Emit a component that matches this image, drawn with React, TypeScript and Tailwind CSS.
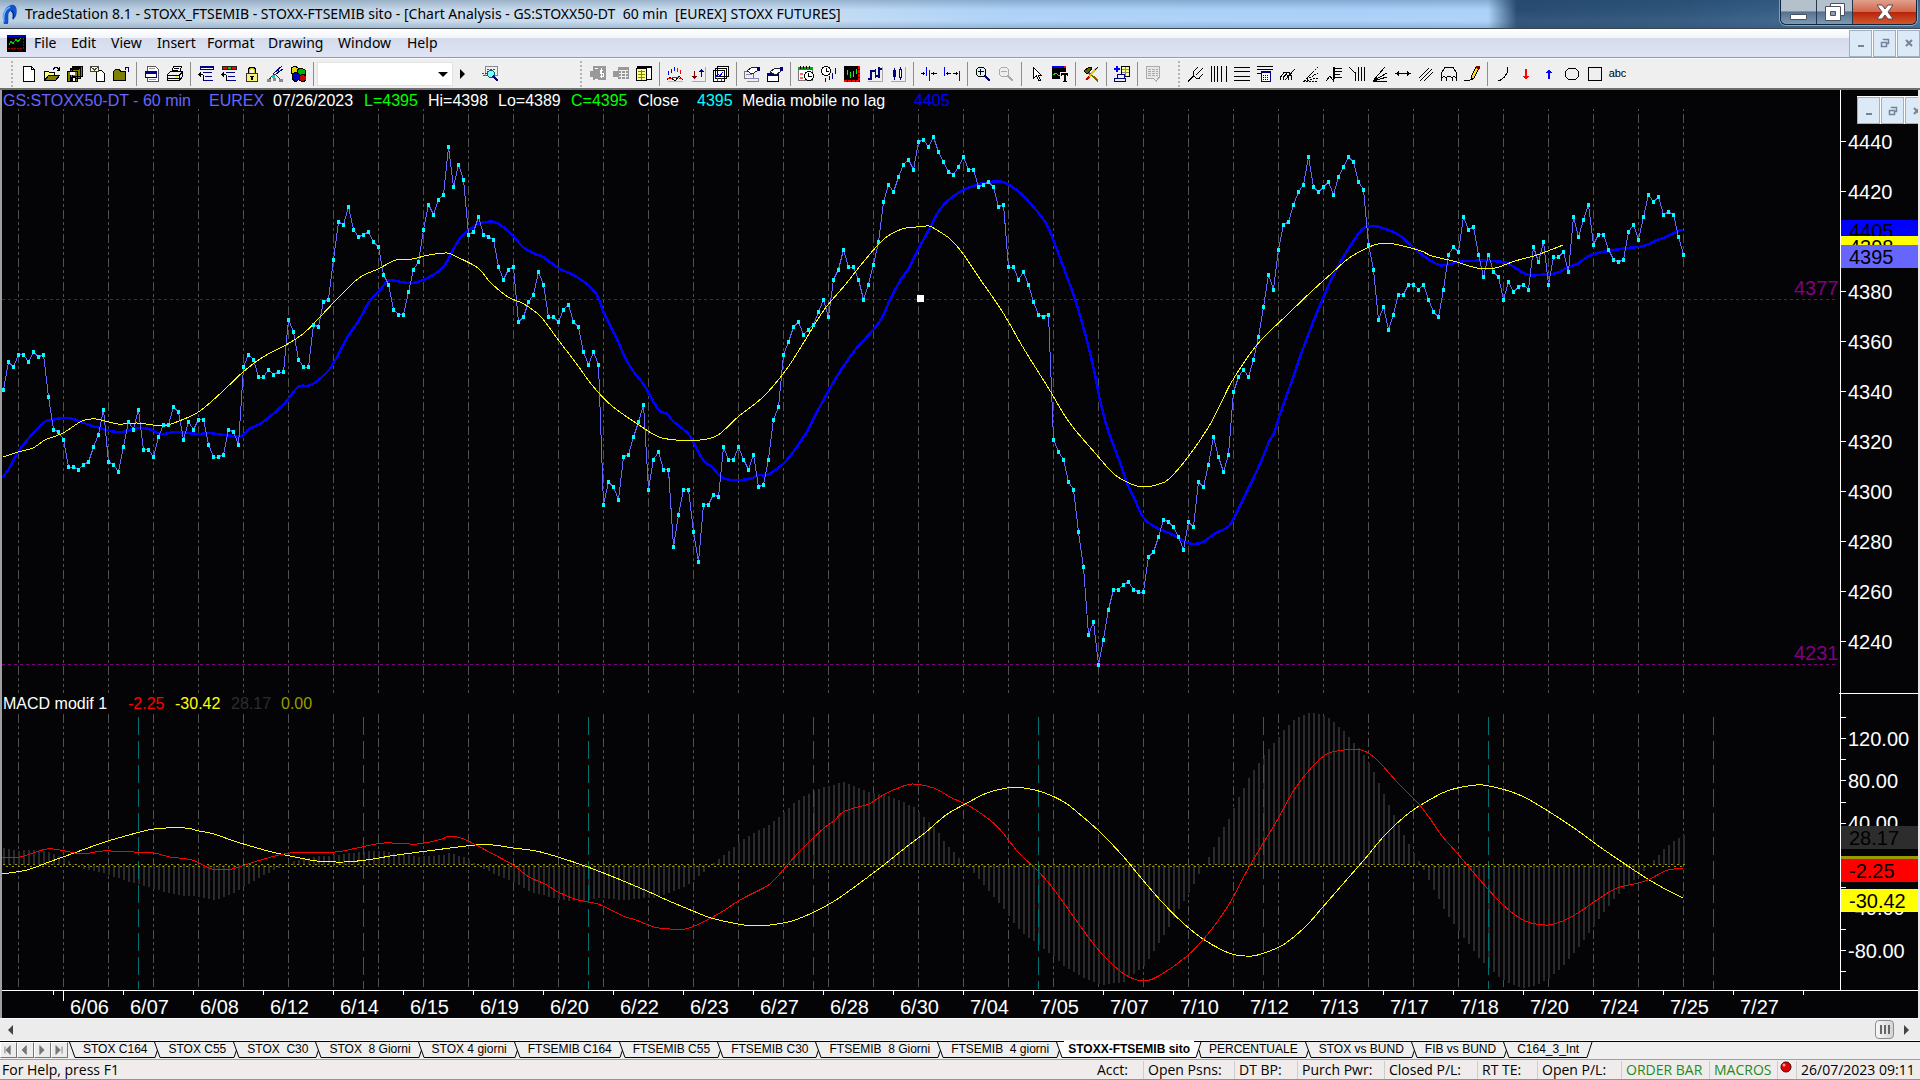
import type { ReactNode } from "react";
import clsx from "clsx";

const UI = "font-['Open_Sans','Noto_Sans',sans-serif]";
const UI_WIDE = "font-['Noto_Sans','Open_Sans',sans-serif]";
const ARIAL = "font-['Liberation_Sans',Arial,sans-serif]";

/* ---------- chart data ---------- */

// hourly closes, 9 bars per session
const closes = [
  4341, 4352, 4350, 4355, 4355, 4352, 4356, 4354, 4355, 4338, 4325, 4324, 4321, 4310, 4310, 4309, 4311, 4312,
  4318, 4323, 4333, 4312, 4311, 4308, 4318, 4328, 4325, 4333, 4317, 4317, 4314, 4322, 4327, 4327, 4334, 4332,
  4321, 4328, 4325, 4329, 4329, 4319, 4314, 4314, 4315, 4325, 4324, 4319, 4350, 4355, 4353, 4346, 4346, 4349,
  4347, 4348, 4348, 4369, 4364, 4353, 4350, 4350, 4367, 4366, 4376, 4377, 4393, 4408, 4407, 4414, 4405, 4402,
  4403, 4404, 4400, 4398, 4387, 4383, 4373, 4371, 4371, 4380, 4389, 4392, 4405, 4415, 4411, 4417, 4419, 4438,
  4422, 4431, 4425, 4403, 4404, 4410, 4403, 4402, 4401, 4390, 4385, 4389, 4390, 4368, 4370, 4376, 4379, 4388,
  4383, 4370, 4370, 4368, 4373, 4375, 4368, 4366, 4356, 4351, 4356, 4351, 4295, 4304, 4302, 4297, 4314, 4315,
  4322, 4328, 4335, 4301, 4313, 4316, 4309, 4309, 4278, 4291, 4301, 4301, 4284, 4272, 4295, 4295, 4299, 4298,
  4318, 4313, 4313, 4318, 4313, 4309, 4315, 4302, 4303, 4313, 4329, 4334, 4355, 4360, 4366, 4368, 4363, 4365,
  4367, 4372, 4377, 4370, 4385, 4389, 4397, 4390, 4390, 4385, 4377, 4383, 4391, 4400, 4416, 4423, 4420, 4426,
  4431, 4433, 4429, 4440, 4441, 4438, 4442, 4436, 4432, 4428, 4427, 4430, 4434, 4429, 4429, 4422, 4423, 4424,
  4422, 4414, 4415, 4390, 4390, 4385, 4388, 4383, 4376, 4371, 4370, 4371, 4321, 4316, 4313, 4304, 4301, 4284,
  4270, 4243, 4248, 4231, 4241, 4253, 4261, 4261, 4263, 4264, 4261, 4260, 4260, 4274, 4276, 4282, 4289, 4288,
  4286, 4282, 4277, 4288, 4286, 4304, 4302, 4311, 4322, 4314, 4308, 4315, 4340, 4346, 4349, 4346, 4353, 4362,
  4374, 4387, 4381, 4397, 4407, 4408, 4415, 4420, 4423, 4434, 4422, 4420, 4422, 4424, 4419, 4426, 4430, 4434,
  4432, 4424, 4421, 4399, 4389, 4369, 4374, 4365, 4371, 4379, 4379, 4383, 4383, 4381, 4383, 4377, 4372, 4370,
  4381, 4395, 4398, 4396, 4410, 4405, 4406, 4395, 4386, 4395, 4388, 4386, 4377, 4384, 4380, 4382, 4383, 4381,
  4398, 4392, 4400, 4383, 4394, 4394, 4396, 4388, 4410, 4402, 4409, 4415, 4399, 4403, 4403, 4397, 4393, 4392,
  4393, 4404, 4407, 4401, 4410, 4419, 4416, 4418, 4411, 4412, 4411, 4402, 4395,
];

type Line = [number, number][];

const parse = (points: string) => points.split(" ").map((p) => p.split(",").map(Number)) as Line;

const noLag = parse(
  "3,477 10,467 18,452 29,438 43,423 51,420 63,418 73,419 84,423 96,427 110,431 122,432 137,428 149,429 161,434 176,432 198,434 208,433 224,435 241,436 249,429 263,422 284,404 298,387 308,386 316,382 329,370 337,357 347,338 359,320 369,302 378,292 388,281 396,281 408,283 418,282 433,275 444,266 453,250 462,236 478,224 486,222 494,222 502,226 513,236 523,247 535,254 543,257 558,268 569,273 580,279 590,287 598,297 604,313 616,337 624,355 633,371 644,385 658,409 667,414 674,422 689,435 703,460 712,467 720,476 730,480 749,479 759,475 767,475 784,463 796,448 808,430 816,414 829,390 841,370 855,350 864,340 880,321 890,300 900,281 909,268 920,246 931,226 941,208 955,195 973,186 990,182 1003,182 1018,191 1031,204 1043,219 1049,229 1063,266 1076,302 1086,337 1094,370 1100,400 1108,430 1118,457 1127,483 1135,500 1143,517 1153,526 1171,534 1184,541 1193,544 1203,542 1214,534 1229,526 1238,510 1249,487 1260,464 1269,442 1274,433 1280,414 1289,389 1300,357 1314,320 1324,296 1336,270 1354,240 1364,228 1374,226 1383,228 1399,235 1412,246 1425,257 1439,265 1450,264 1466,261 1503,262 1517,269 1528,275 1539,275 1557,273 1566,268 1577,264 1591,255 1608,251 1628,248 1644,246 1655,241 1666,237 1678,231 1683,230",
);

const centered = parse(
  "3,457 18,452 33,448 45,440 63,433 82,421 96,419 118,424 137,423 153,425 167,425 184,419 200,411 222,392 243,372 263,357 286,345 304,333 320,317 339,297 359,278 378,269 396,260 412,259 429,255 447,253 455,256 478,268 490,282 508,297 524,304 541,317 559,341 576,363 592,385 612,406 645,429 659,437 676,440 700,440 718,435 739,416 763,397 786,370 804,342 824,310 845,285 865,260 884,239 902,229 916,227 929,226 935,229 949,238 961,251 980,279 1002,311 1024,349 1049,389 1069,422 1096,454 1114,474 1131,484 1145,487 1159,484 1169,479 1188,457 1208,428 1220,405 1231,383 1247,358 1262,339 1287,315 1312,291 1332,273 1349,258 1365,249 1378,244 1394,244 1421,251 1432,256 1457,262 1477,268 1495,268 1515,261 1537,255 1563,245",
);

const macd = parse(
  "2,857 20,857 47,849 65,851 83,854 103,851 134,852 154,853 170,857 192,860 212,869 232,869 254,862 290,853 335,852 357,848 384,843 417,844 442,839 449,836 464,839 491,853 513,865 529,877 545,884 558,892 578,900 598,904 623,916 636,920 654,927 670,929 685,929 699,924 720,913 740,900 767,886 777,877 789,863 803,848 824,828 834,821 843,812 858,807 869,804 885,794 901,787 913,784 934,788 950,797 971,807 991,821 1003,833 1018,852 1036,869 1052,887 1073,916 1089,938 1103,955 1124,974 1144,981 1162,974 1187,956 1207,935 1228,906 1248,869 1264,842 1279,817 1294,790 1312,767 1327,754 1344,750 1361,750 1370,754 1381,764 1398,783 1418,803 1431,820 1442,836 1457,853 1479,879 1500,902 1518,917 1531,923 1548,925 1563,921 1578,913 1600,898 1617,888 1639,883 1650,879 1665,871 1674,869 1683,868",
);

const signal = parse(
  "2,874 27,870 49,862 74,853 105,842 129,835 154,829 185,828 199,831 214,834 237,842 268,851 290,856 317,861 344,862 366,860 397,855 435,850 475,845 493,845 513,848 536,851 558,857 585,866 616,878 647,891 669,901 693,911 711,918 738,924 756,926 777,924 795,920 816,911 836,900 864,880 885,864 905,848 926,832 946,815 967,803 987,793 1007,788 1024,788 1042,792 1064,802 1083,817 1101,833 1122,855 1142,879 1162,902 1183,923 1203,939 1224,951 1236,955 1252,956 1264,953 1283,945 1305,927 1322,908 1342,885 1364,860 1385,835 1409,813 1431,799 1450,790 1476,785 1489,786 1509,791 1526,798 1548,811 1574,828 1600,847 1622,862 1643,876 1665,889 1683,898",
);

const dates = [
  "6/06", "6/07", "6/08", "6/12", "6/14", "6/15", "6/19", "6/20", "6/22", "6/23", "6/27", "6/28", "6/30", "7/04",
  "7/05", "7/07", "7/10", "7/12", "7/13", "7/17", "7/18", "7/20", "7/24", "7/25", "7/27",
];

const ZERO = 865;
const barX = (i: number) => 3 + i * 5;
const priceY = (p: number) => 142 + (4440 - p) * 2.5;

function valueAt(line: Line, x: number) {
  const n = line.findIndex((p) => p[0] >= x);
  if (n <= 0) return line[n === 0 ? 0 : line.length - 1][1];
  const [x0, y0] = line[n - 1];
  const [x1, y1] = line[n];
  return y0 + ((y1 - y0) * (x - x0)) / (x1 - x0);
}

// Catmull-Rom spline through the points
function smooth(line: Line) {
  let d = `M${line[0].join(",")}`;
  for (let i = 0; i < line.length - 1; i++) {
    const a = line[Math.max(i - 1, 0)];
    const b = line[i];
    const c = line[i + 1];
    const e = line[Math.min(i + 2, line.length - 1)];
    const c1 = [b[0] + (c[0] - a[0]) / 6, b[1] + (c[1] - a[1]) / 6];
    const c2 = [c[0] - (e[0] - b[0]) / 6, c[1] - (e[1] - b[1]) / 6];
    d += `C${c1.join(",")} ${c2.join(",")} ${c.join(",")}`;
  }
  return d;
}

/* ---------- toolbar icons ---------- */

const navy = "#000080";

const icons: Record<string, ReactNode> = {
  New: <path d="M2.500.5h8l3 3v12h-11zM10.500.5v3h3" fill="#fff" stroke="#000" />,
  Open: (
    <>
      <path d="M.5 14.500v-9h4l1 1h5v3" fill="#ffff80" stroke="#000" />
      <path d="M.5 14.500l4-5h11l-4 5z" fill="#808000" stroke="#000" />
      <path d="M9 3.500l2-2h2l2 2M15.500 1v3h-3" fill="none" stroke="#000" />
    </>
  ),
  "Save all": (
    <>
      <path d="M5.500.5h10v10h-10zM3.500 2.500h10v10h-10zM.5 5.500h10v10h-10z" fill="#808000" stroke="#000" />
      <path d="M3 6h5v3h-5z" fill="#fff" />
      <path d="M3 11h6v4h-6zM6 1h8v1h-8zM4 3h8v1h-8z" />
      <path d="M6 12h2v3h-2z" fill="#fff" />
    </>
  ),
  "Mail document": (
    <>
      <path d="M6.500 4.500h5l3 3v8h-8z" fill="#fff" stroke="#000" />
      <path d="M.5.5h8v5h-8z" fill="#ffffb0" stroke="#444" />
      <path d="M1 1l3.500 3L8 1" fill="none" stroke="#444" />
    </>
  ),
  "Close workspace": (
    <>
      <path d="M.5 14.500v-9l2-2h4l1 2h5v9z" fill="#808000" stroke="#000" />
      <path d="M15 6V2M12 1.500h4M12 1v3" stroke={navy} fill="none" />
    </>
  ),
  "Document window": (
    <>
      <path d="M3.500.5h8l3 3v12h-11z" fill="#fff" stroke="#555" />
      <path d="M5 2.500h6M5 13.500h7" stroke="#999" />
      <path d="M1.500 5.500h11v6h-11z" fill="#fff" stroke={navy} />
      <path d="M1 5h12v3h-12z" fill={navy} />
    </>
  ),
  Print: (
    <>
      <path d="M4.500 6.500l2-6h8l-2 6" fill="#fff" stroke="#000" />
      <path d="M7 2.500h5M6 4.500h5" stroke="#000" />
      <path d="M.5 8.500l3-3h12v5l-3 4h-12z" fill="#f0f0f0" stroke="#000" />
      <path d="M1 9.500h11l3-3M1 12.500h11M12.500 9v5" stroke="#000" fill="none" />
      <path d="M8 10h3v2h-3z" fill="#ff0" />
    </>
  ),
  "Insert row": (
    <>
      <path d="M2 0h14v4h-14z" fill={navy} />
      <path d="M3 2h12v1h-12z" fill="#fff" />
      <path d="M5 6h9v1h-9zM7 10h7v1h-7zM6 14h9v1h-9z" fill={navy} />
      <path d="M0 8h5v1h-5zM2 6h1v5h-1zM1 7h1v3h-1zM5 9h1v6h-1z" />
    </>
  ),
  "Insert status": (
    <>
      <path d="M1 0h15v4h-15z" fill="#222" />
      <path d="M2 1h4v2h-4zM11 1h4v2h-4z" fill="red" />
      <path d="M7 1h3v2h-3z" fill="#0c0" />
      <path d="M5 6h9v1h-9zM7 10h7v1h-7zM6 14h9v1h-9z" fill={navy} />
      <path d="M0 8h5v1h-5zM2 6h1v5h-1zM1 7h1v3h-1zM5 9h1v6h-1z" />
    </>
  ),
  Lock: (
    <>
      <path d="M4.500 7v-4l2-2h3l2 2v4" fill="none" stroke="#000" />
      <path d="M5.500 7v-3l2-2h1l2 2v3" fill="none" stroke="#cc0" />
      <path d="M2.500 7.500h11v8h-11z" fill="#f4f07a" stroke="#333" />
      <path d="M7 11h2v3h-2zM6 10h4v1h-4z" />
    </>
  ),
  Network: (
    <>
      <path d="M15 0L6 8M16 3L8 9M13 1l-3 7" stroke={navy} />
      <path d="M1 15l4-5 3-2 3 3 4 4" fill="none" stroke="#333" />
      <path d="M0 13h4v3h-4zM6 12h3v3h-3zM12 13h4v3h-4z" fill="#888" />
      <path d="M5 9h3v3h-3z" fill="#0cc" />
    </>
  ),
  Platform: (
    <>
      <path d="M1 2l4-2 3 2v5l-3 2-4-2z" fill="#e0d800" stroke="#000" />
      <path d="M7 4l4-2 4 2v5l-4 2-4-2z" fill="#00b000" stroke="#000" />
      <path d="M2 8l4-2 3 2v5l-3 3-4-3z" fill="#0000c0" stroke="#000" />
      <path d="M9 10l4-2 3 2v4l-3 2-4-2z" fill="#d00000" stroke="#000" />
    </>
  ),
  "Symbol lookup": (
    <>
      <path d="M3.500.5h12v9h-12z" fill="#eee" stroke="#889" />
      <path d="M5 3.500h9M5 5.500h3M0 7.500h6M1 9.500h4" stroke="#448" strokeDasharray="2 1" />
      <circle cx="9" cy="8" r="3.500" fill="#7ff" stroke="#066" />
      <path d="M11 10l5 5" stroke={navy} strokeWidth="2" />
    </>
  ),
  "Trade bar": (
    <>
      <path d="M3 0h13v14h-13zM0 5h6v6h-6z" fill="#999" />
      <path d="M13 4h-3v3h3v3h-3M11.500 2v10M5 2h3M5 13h3" stroke="#fff" fill="none" />
    </>
  ),
  "Trade grid": (
    <>
      <path d="M5 1h11v12h-11zM0 5h7v6h-7z" fill="#999" />
      <path d="M6 4.500h9M6 7.500h9M6 10.500h9M8.500 4v9M12.500 4v9" stroke="#eee" />
    </>
  ),
  "Data window": (
    <>
      <path d="M4.500.5h11v13h-11z" fill="#fff" stroke="#000" />
      <path d="M1 0h15v2h-15z" />
      <path d="M.5 2.500h10v12h-10z" fill="#ff8" stroke="#000" />
      <path d="M2 5.500h7M2 8.500h7M2 11.500h7M5.500 4v10" stroke="#880" />
    </>
  ),
  Indicator: (
    <>
      <path d="M1.500 5v4M4.500 3v4M7.500 1v4" stroke="#00f" />
      <path d="M10.500 2v4M13.500 4v4" stroke="red" />
      <path d="M0 14l3-3 5 4 4-5 4 4" fill="none" stroke="#000" />
      <path d="M0 12l5 0 4-1 6 2" fill="none" stroke="red" />
      <path d="M1 15.500h15" stroke="#bbb" />
    </>
  ),
  Strategy: (
    <>
      <path d="M15.500 1v14.500H2" stroke="#aaa" fill="none" />
      <path d="M4 5h1v8h-1zM2 10h5v1h-5zM3 11h3v1h-3z" fill="#800000" />
      <path d="M11 3h1v8h-1zM9 5h5v1h-5zM10 4h3v1h-3z" fill={navy} />
    </>
  ),
  Analysis: (
    <>
      <path d="M4.500.5h11v10h-11zM2.500 2.500h11v10h-11zM.5 4.500h11v11h-11z" fill="#fff" stroke="#000" />
      <path d="M2 12l3-4 2 2 3-4" stroke="#00f" fill="none" />
      <path d="M4.500 12v3M8.500 12v3" stroke="red" />
    </>
  ),
  "Format symbol": (
    <>
      <path d="M.5 5.500h9v7h-9z" fill="#eee" stroke="#777" />
      <path d="M2 8.500h6M3 12.500h11v3h-11" stroke="#88b" fill="none" />
      <path d="M3 5l5-4h5v4l-5 3z" fill="#fff" stroke="#222" />
      <path d="M13 1h3v4h-3z" fill={navy} />
    </>
  ),
  "Format window": (
    <>
      <path d="M.5 7.500h11v8h-11z" fill="#fff" stroke="#000" />
      <path d="M0 7h12v3h-12z" fill={navy} />
      <path d="M3 6l5-4h5v4l-4 3z" fill="#fff" stroke="#222" />
      <path d="M13 1h3v4h-3z" fill={navy} />
    </>
  ),
  Sessions: (
    <>
      <path d="M.5 2.500h14v12h-14z" fill="#fff" stroke="#777" />
      <path d="M0 1h15v3h-15z" fill="#0a0" />
      <path d="M2 0v3M5 0v3M8 0v3M11 0v3" stroke="#000" />
      <path d="M2 7h3v2h-3zM2 11h3v2h-3z" fill="#f66" />
      <circle cx="11" cy="10" r="4.500" fill="#fff" stroke="#000" />
      <path d="M10.500 7v3.500h3" stroke="#000" fill="none" />
    </>
  ),
  Interval: (
    <>
      <circle cx="5" cy="5" r="4.500" fill="#fff" stroke="#000" />
      <path d="M5 2v3.500h3" stroke="#000" fill="none" />
      <path d="M4.500 12v4M8.500 10v4M11.500 7v6M14.500 2v6" stroke={navy} />
    </>
  ),
  Bars: (
    <>
      <path d="M0 0h16v16h-16z" />
      <path d="M3.500 4v5M6.500 6v6M9.500 5v6M12.500 3v5" stroke="#0f0" />
      <path d="M15 0v14M0 15h16" stroke="red" strokeWidth="2" strokeDasharray="3 1" />
    </>
  ),
  "Bar style": (
    <>
      <path d="M15.500 1v14.500H1" stroke="#aaa" fill="none" />
      <path d="M3 4h2v10h-2zM1 12h2v2h-2zM5 4h3v2h-3zM8 3h1v9h-1zM11 1h2v11h-2zM13 2h2v2h-2zM9 9h2v2h-2z" fill={navy} />
    </>
  ),
  Candles: (
    <>
      <path d="M15.500 1v14.500H1" stroke="#aaa" fill="none" />
      <path d="M4.500 2v12M10.500 1v13" stroke={navy} />
      <path d="M3 4h3v7h-3z" fill={navy} />
      <path d="M9.500 3.500h2v8h-2z" fill="#fff" stroke={navy} />
    </>
  ),
  "Decrease spacing": (
    <>
      <path d="M5.500 1v9M8.500 4v11" stroke="#00f" />
      <path d="M0 7h4v1h-4zM2 6h1v3h-1zM10 7h6v1h-6zM12 6h1v3h-1z" />
    </>
  ),
  "Increase spacing": (
    <>
      <path d="M.5 1v9M15.500 5v10" stroke="#00f" />
      <path d="M2 7h5v1h-5zM3 6h1v3h-1zM9 7h5v1h-5zM12 6h1v3h-1z" />
    </>
  ),
  "Zoom in": (
    <>
      <circle cx="6" cy="6" r="5" fill="#d8f4f4" stroke="#000" />
      <path d="M3 5.500h6M5.500 3v6" stroke="#000" />
      <path d="M10 10l5 5" stroke={navy} strokeWidth="2" />
    </>
  ),
  "Zoom out": (
    <>
      <circle cx="6" cy="6" r="5" fill="#eee" stroke="#aaa" />
      <path d="M3 5.500h6" stroke="#aaa" />
      <path d="M10 10l5 5" stroke="#aaa" strokeWidth="2" />
    </>
  ),
  Pointer: <path d="M4.500 1.500v11l3-3 2 5h2l-2-5h3z" fill="#fff" stroke="#000" />,
  "Text tool": (
    <>
      <path d="M0 1h14v12h-14z" />
      <path d="M0 0h14v2h-14z" fill="#00f" />
      <path d="M12 0h2v2h-2z" fill="red" />
      <path d="M1 9l3-2 3 3 3-2" stroke="#0f0" fill="none" />
      <path d="M8 6h8v10h-8z" fill="#efefef" />
      <path d="M9 7h7v2h-7zM12 7h2v8h-2zM11 15h4v1h-4zM9 7h1v3h-1zM15 7h1v3h-1z" />
    </>
  ),
  Tools: (
    <>
      <path d="M4 5l11 10" stroke="#806000" strokeWidth="2" />
      <path d="M14 2L3 14" stroke="#d8d000" strokeWidth="2" />
      <path d="M3 14l3-3" stroke="#c00" strokeWidth="2" />
      <path d="M1 5l5-4 3 1-2 3-3 3z" fill="#606000" stroke="#000" />
      <path d="M15 1l-3 3" stroke="#000" />
    </>
  ),
  "Add chart": (
    <>
      <path d="M7.500.5h8v10h-8z" fill="#ff8" stroke="#000" />
      <path d="M8 3.500h7M8 6.500h7M11.500 1v9" stroke="#888" />
      <path d="M0 2h6v2h-6zM2 0h2v6h-2z" fill="#00f" />
      <path d="M3.500 8.500h7v4h-7zM.5 12.500h11v3h-11z" fill="#eee" stroke={navy} />
    </>
  ),
  Notes: (
    <>
      <path d="M1.500.5h13v11l-2 1-1 3-3-3h-7z" fill="#e8e8e8" stroke="#aaa" />
      <path d="M3 3.500h10M3 5.500h10M3 7.500h10M3 9.500h10" stroke="#aaa" strokeDasharray="3 1" />
    </>
  ),
  Pitchfork: <path d="M0 15.500l6-6M5 5v4l3 3h4M5 6l5-5M8 9l7-7M11 12l4-4" fill="none" stroke="#000" />,
  "Time zones": <path d="M.5 0v16M3.500 0v16M6.500 0v16M10.500 0v16M15.500 0v16" stroke="#000" />,
  "Horizontal zones": <path d="M0 1.500h16M0 5.500h16M0 10.500h16M0 14.500h16" stroke="#000" />,
  Calculator: (
    <>
      <path d="M0 .5h16M0 3.500h16M0 7.500h4" stroke="#000" />
      <path d="M4.500 5.500h9v10h-9z" fill="#fff" stroke={navy} />
      <path d="M4 5h10v2h-10z" fill={navy} />
      <path d="M6 9.500h6M6 11.500h6M6 13.500h6" stroke={navy} strokeDasharray="1 1" />
    </>
  ),
  "Speed arcs": (
    <path d="M.5 14v-3l4-5h4l3 4v4M3.500 14v-3l3-3 2 3v3M5 14L15 3" fill="none" stroke="#000" />
  ),
  "Fan lines": <path d="M0 15.500h15M1 15L15 1M1 15L15 7M1 15l14-3" stroke="#000" strokeDasharray="2 1" />,
  "Price levels": (
    <path d="M0 15l4-5 3 4V1M8 2.500h8M8 5.500h8M8 8.500h6M8 11.500h8M8.500 1v12" fill="none" stroke="#000" />
  ),
  "Time lines": <path d="M0 1l6 6M6.500 6v9M9.500 1v14M12.500 1v14M15.500 1v14" stroke="#000" />,
  "Gann fan": <path d="M1 15.500h14M1 15L13 1M1 15l14-8M1 15l14-4" stroke="#000" />,
  Extension: <path d="M0 7h16v1H0zM2 6h1v3h-1zM3 5h1v5h-1zM12 5h1v5h-1zM13 6h1v3h-1z" />,
  "Parallel lines": <path d="M1 12L11 2M2 15L14 3M6 15l9-9" stroke="#000" />,
  Cycles: (
    <path d="M.5 15v-8l3-5 3-1h3l3 1 3 5v8M1 12l2-2 2 2v3M5 12l2-2h2l2 2v3M11 12l2-2 2 2" fill="none" stroke="#000" />
  ),
  Pencil: (
    <>
      <path d="M7 11l5-10 3 1-5 10-3 2z" fill="#ffe000" stroke="#000" />
      <path d="M12 0h4v3h-3z" fill="#800000" />
      <path d="M0 14.500h5l3-2" stroke="#000" fill="none" />
    </>
  ),
  Arc: <path d="M12.500 1v5l-3 5-4 3h-3" fill="none" stroke="#000" />,
  "Down arrow": <path d="M7 3h2v7h2l-3 4-3-4h2z" fill="red" />,
  "Up arrow": <path d="M7 13h2V7h2L8 3 5 7h2z" fill="#00f" />,
  Ellipse: <ellipse cx="8" cy="8" rx="7" ry="6" fill="none" stroke="#000" />,
  Rectangle: <path d="M1.500 1.500h13v13h-13z" fill="none" stroke="#000" />,
};

const mainTools = [
  ["New", "Open", "Save all", "Mail document", "Close workspace"],
  ["Document window", "Print"],
  ["Insert row", "Insert status", "Lock", "Network", "Platform"],
];

const chartTools = [
  ["Trade bar", "Trade grid", "Data window"],
  ["Indicator", "Strategy", "Analysis"],
  ["Format symbol", "Format window"],
  ["Sessions", "Interval", "Bars", "Bar style", "Candles"],
  ["Decrease spacing", "Increase spacing"],
  ["Zoom in", "Zoom out"],
  ["Pointer", "Text tool"],
  ["Tools"],
  ["Add chart"],
  ["Notes"],
];

const drawingTools = [
  [
    "Pitchfork", "Time zones", "Horizontal zones", "Calculator", "Speed arcs", "Fan lines", "Price levels",
    "Time lines", "Gann fan", "Extension", "Parallel lines", "Cycles", "Pencil",
  ],
  ["Arc", "Down arrow", "Up arrow", "Ellipse", "Rectangle"],
];

function ToolButton({ name }: { name: string }) {
  return (
    <button type="button" aria-label={name} className="flex h-6 w-[23px] shrink-0 items-center justify-center">
      <svg width="16" height="16" viewBox="0 0 16 16" shapeRendering="crispEdges">
        {icons[name]}
      </svg>
    </button>
  );
}

function Separator() {
  return (
    <span className="flex w-2 shrink-0 justify-center">
      <span className="h-6 w-px bg-[#8d8d8d]" />
    </span>
  );
}

function Grip() {
  return <span className="mr-[3px] h-[26px] w-[3px] shrink-0 border-l-2 border-dotted border-[#b4b4b4]" />;
}

function ToolGroups({ groups }: { groups: string[][] }) {
  return (
    <>
      {groups.map((group, i) => (
        <div key={group[0]} className="flex items-center">
          {i > 0 && <Separator />}
          {group.map((name) => (
            <ToolButton key={name} name={name} />
          ))}
        </div>
      ))}
    </>
  );
}

/* ---------- window chrome ---------- */

function TitleBar() {
  return (
    <header className="relative flex h-[29px] items-center border-b border-[#3c4650] bg-[linear-gradient(90deg,#b5cbe0_0%,#c3d6e8_22%,#c6dcf2_40%,#a9cff6_52%,#a4cdf8_70%,#a6cff8_77.500%,#1d436a_79%,#234c75_88%,#3a668f_100%)] pl-[2px]">
      <div className="absolute inset-0 bg-[linear-gradient(180deg,rgba(60,90,120,0.3),rgba(255,255,255,0.05)_35%,rgba(255,255,255,0.1)_75%,rgba(90,120,150,0.3))]" />
      <svg className="relative" width="16" height="24" viewBox="0 0 16 24">
        <path d="M2 22C-1 14 2 5 9 3c5-1 7 4 5 11l-3 4c1-5 0-9-2-9-4 1-2 7-3 13z" fill="#1552c8" />
        <path d="M2 20C1 13 3 7 8 5" fill="none" stroke="#6fb4ff" strokeWidth="1.500" />
        <path d="M11 17c1-5 0-8-2-8" fill="none" stroke="#002a80" strokeWidth="1.500" />
      </svg>
      <h1 className={clsx(UI_WIDE, "relative ml-[7px] whitespace-pre text-sm text-black")}>
        TradeStation 8.1 - STOXX_FTSEMIB - STOXX-FTSEMIB sito - [Chart Analysis - GS:STOXX50-DT  60 min  [EUREX] STOXX
        FUTURES]
      </h1>
      <div className="relative mr-[3px] ml-auto flex h-[25px] self-start overflow-hidden rounded-b-md border border-t-0 border-[#10263c] ring-1 ring-white/40">
        <button
          type="button"
          aria-label="Minimize"
          className="flex w-9 items-end justify-center border-r border-[#22384f] bg-[linear-gradient(180deg,#b4c0cc_45%,#56728e_50%,#7d9ab5)] pb-1"
        >
          <span className="h-[6px] w-[17px] rounded-[1px] border border-[#4a5260] bg-white" />
        </button>
        <button
          type="button"
          aria-label="Restore"
          className="flex w-9 items-center justify-center border-r border-[#22384f] bg-[linear-gradient(180deg,#b4c0cc_45%,#56728e_50%,#7d9ab5)]"
        >
          <svg width="20" height="18" viewBox="0 0 20 18">
            <path d="M5.500.5h14v12h-14z" fill="#fff" stroke="#4a5260" />
            <path d="M.5 3.500h15v14h-15z" fill="#fff" stroke="#4a5260" />
            <path d="M5.500 8.500h5v4h-5z" fill="#8ba0b5" stroke="#4a5260" />
          </svg>
        </button>
        <button
          type="button"
          aria-label="Close"
          className="flex w-[63px] items-center justify-center bg-[linear-gradient(180deg,#e0a08c,#d4674c_48%,#b8230c_52%,#d25a2c)]"
        >
          <svg width="18" height="16" viewBox="0 0 18 16">
            <path
              d="M1 1h5l3 4 3-4h5l-5 7 5 7h-5l-3-4-3 4H1l5-7z"
              fill="#fff"
              stroke="#5a4a50"
              strokeLinejoin="round"
            />
          </svg>
        </button>
      </div>
    </header>
  );
}

function MdiButtons() {
  return (
    <div className="flex h-[27px] gap-px bg-white">
      {["Minimize", "Restore", "Close"].map((name) => (
        <button
          key={name}
          type="button"
          aria-label={`${name} chart`}
          className="flex w-[23px] shrink-0 items-center justify-center border border-[#9fb0c4] bg-[#dceaf8]"
        >
          <svg width="10" height="10" viewBox="0 0 10 10" fill="none" stroke="#71849a" strokeWidth="2">
            {name === "Minimize" && <path d="M2 8h6" />}
            {name === "Restore" && <path d="M3.500 2V1.500h5v4H7M1.500 4.500h5v4h-5z" strokeWidth="1.500" />}
            {name === "Close" && <path d="M2 2l6 6M8 2l-6 6" />}
          </svg>
        </button>
      ))}
    </div>
  );
}

const menus = [
  ["File", "w-[37px]"],
  ["Edit", "w-10"],
  ["View", "w-[46px]"],
  ["Insert", "w-[50px]"],
  ["Format", "w-[61px]"],
  ["Drawing", "w-[70px]"],
  ["Window", "w-[69px]"],
  ["Help", "w-10"],
];

function MenuBar() {
  return (
    <nav className="flex h-[29px] items-center border-b border-[#9a9a9a] bg-[linear-gradient(180deg,#fff,#f4f6fb_30%,#d5dbec_34%,#dfe5f3)] pl-[7px]">
      <svg className="mr-2 shrink-0" width="19" height="17" viewBox="0 0 19 17" shapeRendering="crispEdges">
        <path d="M0 0h19v17H0z" />
        <path d="M0 0h19v2H0z" fill="#00c" />
        <path d="M2 10l2-4 2 3 3-5 2 3 3-4" fill="none" stroke="#0c0" />
        <path d="M1 13.500h15M16.500 3v12" stroke="#a00" strokeDasharray="2 1" />
      </svg>
      {menus.map(([label, width]) => (
        <button key={label} type="button" className={clsx(UI_WIDE, width, "shrink-0 text-left text-sm")}>
          {label}
        </button>
      ))}
      <div className="ml-auto">
        <MdiButtons />
      </div>
    </nav>
  );
}

function Toolbar() {
  return (
    <div className="flex h-8 items-center border-t border-b-2 border-t-[#fafafa] border-b-[#6e6e6e] bg-[#efefef] pl-[11px]">
      <Grip />
      <ToolGroups groups={mainTools} />
      <Separator />
      <div className="relative h-6 w-[136px] shrink-0">
        <select aria-label="Symbol" className="h-full w-full appearance-none border border-[#e2e2e2] bg-white" />
        <span className="pointer-events-none absolute top-[10px] right-[5px] border-x-[5px] border-t-[5px] border-x-transparent border-t-black" />
      </div>
      <button type="button" aria-label="Go" className="flex w-[18px] shrink-0 justify-center">
        <span className="border-y-[5px] border-l-[5px] border-y-transparent border-l-black" />
      </button>
      <div className="mr-[79px] ml-[7px]">
        <ToolButton name="Symbol lookup" />
      </div>
      <Grip />
      <ToolGroups groups={chartTools} />
      <div className="w-[14px] shrink-0" />
      <Grip />
      <ToolGroups groups={drawingTools} />
      <button type="button" className={clsx(ARIAL, "w-[23px] shrink-0 text-center text-[11px]")}>
        abc
      </button>
    </div>
  );
}

/* ---------- chart ---------- */

function Chart() {
  const lastX = barX(closes.length - 1);
  const sessions = Array.from({ length: 38 }, (_, k) => 18 + k * 45);
  const cycles = Array.from({ length: 8 }, (_, k) => 138 + k * 225);
  const prices = Array.from({ length: 11 }, (_, k) => 4440 - k * 20).filter((p) => p !== 4400);

  return (
    <svg
      viewBox="2 90 1916 928"
      className={clsx(ARIAL, "block w-full bg-[#040406] text-[20px]")}
      fill="#fff"
      role="img"
      aria-label="STOXX50 60 minute chart"
    >
      <g shapeRendering="crispEdges" fill="none">
        {sessions.map((x) => (
          <g key={x} stroke="#505050" strokeDasharray="9 3 3 3 3 3">
            <path d={`M${x + 0.5} 109V693`} strokeDashoffset="19" />
            <path d={`M${x + 0.5} 714V987`} />
          </g>
        ))}
        <g fill="#2b2b2b">
          {closes.map((_, i) => {
            const x = barX(i);
            const end = Math.round(ZERO + valueAt(macd, x) - valueAt(signal, x));
            return <rect key={i} x={x} y={Math.min(end, ZERO)} width="2" height={Math.abs(end - ZERO)} />;
          })}
        </g>
        {cycles.map((x) => (
          <path key={x} d={`M${x + 0.5} 717V989`} stroke="#007070" strokeDasharray="18 6" />
        ))}

        <path d="M2 299.500H1837M2 664.500H1837" stroke="#800080" strokeDasharray="3 3" />
        <path d={`M3 864.500H${lastX + 2}`} stroke="#9a9a00" strokeDasharray="2 4" />
        <path d={`M6 866.500H${lastX + 2}`} stroke="#9a9a00" strokeDasharray="2 4" />

        <path d={smooth(noLag)} stroke="#0000ff" strokeWidth="2.500" />
        <polyline points={closes.map((p, i) => `${barX(i) + 0.5},${priceY(p)}`).join(" ")} stroke="#6666ff" />
        <path d={smooth(centered)} stroke="#ffff00" />
        <g fill="#00ffff">
          {closes.map((p, i) => (
            <rect key={i} x={barX(i) - 1} y={Math.round(priceY(p)) - 2} width="3" height="4" />
          ))}
        </g>
        <path d={smooth(signal)} stroke="#ffff00" />
        <path d={smooth(macd)} stroke="#ff0000" />
        <rect x="917" y="295" width="7" height="7" fill="#fff" />

        <g stroke="#fff">
          <path d="M1840.500 90V990M1839 693.500H1918M2 990.500H1918M63.500 990V1001" />
          {dates.concat("").map((_, k) => (
            <path key={k} d={`M${53.5 + k * 70} 990V995`} />
          ))}
          {prices.map((p) => (
            <path key={p} d={`M1840 ${priceY(p) - 0.5}H1846`} />
          ))}
          {[717, 738, 759, 780, 802, 823, 887, 929, 950, 971].map((y) => (
            <path key={y} d={`M1840 ${y + 0.5}H1846`} />
          ))}
        </g>
      </g>

      {dates.map((d, k) => (
        <text key={d} x={k === 0 ? 70 : 60 + k * 70} y="1014">
          {d}
        </text>
      ))}
      {prices.map((p) => (
        <text key={p} x="1848" y={priceY(p) + 7}>
          {p}
        </text>
      ))}
      <g fill="#800080">
        <text x="1794" y="295">4377</text>
        <text x="1794" y="660">4231</text>
      </g>
      <text x="1848" y="746">120.00</text>
      <text x="1848" y="788">80.00</text>
      <text x="1848" y="830">40.00</text>
      <text x="1848" y="915">-40.00</text>
      <text x="1848" y="958">-80.00</text>

      <rect x="1841" y="220" width="77" height="23" fill="#0000ff" />
      <text x="1849" y="238" fill="#000">4405</text>
      <rect x="1841" y="236" width="77" height="23" fill="#ffff00" />
      <text x="1849" y="254" fill="#000">4398</text>
      <rect x="1841" y="245" width="77" height="23" fill="#6666ff" />
      <text x="1849" y="264" fill="#000">4395</text>
      <rect x="1841" y="826" width="77" height="23" fill="#2d2d2d" />
      <text x="1849" y="845" fill="#000">28.17</text>
      <rect x="1841" y="856" width="77" height="10" fill="#9a9a00" />
      <rect x="1841" y="859" width="77" height="23" fill="#ff0000" />
      <text x="1849" y="878" fill="#000">-2.25</text>
      <rect x="1841" y="889" width="77" height="23" fill="#ffff00" />
      <text x="1849" y="908" fill="#000">-30.42</text>

      <g className="text-[16px]">
        <g fill="#6666ff">
          <text x="3" y="106">GS:STOXX50-DT - 60 min</text>
          <text x="209" y="106">EUREX</text>
        </g>
        <text x="273" y="106">07/26/2023</text>
        <text x="364" y="106" fill="#00ff00">L=4395</text>
        <text x="428" y="106">Hi=4398</text>
        <text x="498" y="106">Lo=4389</text>
        <text x="571" y="106" fill="#00ff00">C=4395</text>
        <text x="638" y="106">Close</text>
        <text x="697" y="106" fill="#00ffff">4395</text>
        <text x="742" y="106">Media mobile no lag</text>
        <text x="914" y="106" fill="#0000ff">4405</text>
        <text x="3" y="709">MACD modif 1</text>
        <text x="128" y="709" fill="#ff0000">-2.25</text>
        <text x="175" y="709" fill="#ffff00">-30.42</text>
        <text x="231" y="709" fill="#2d2d2d">28.17</text>
        <text x="281" y="709" fill="#9a9a00">0.00</text>
      </g>
    </svg>
  );
}

/* ---------- bottom bars ---------- */

function ScrollBar() {
  return (
    <div className="flex h-[23px] items-center border-y border-y-[#fafafa] bg-[#ececec] px-2">
      <button type="button" aria-label="Scroll left">
        <span className="block border-y-[5px] border-r-[5px] border-y-transparent border-r-[#444]" />
      </button>
      <button
        type="button"
        aria-label="Scroll position"
        className="mr-[10px] ml-auto flex h-[19px] w-[19px] items-center justify-center gap-[2px] rounded-sm border border-[#8c8c8c] bg-[linear-gradient(90deg,#f8f8f8,#d4d4d4)]"
      >
        <span className="h-[9px] w-[2px] bg-[#666]" />
        <span className="h-[9px] w-[2px] bg-[#666]" />
        <span className="h-[9px] w-[2px] bg-[#666]" />
      </button>
      <button type="button" aria-label="Scroll right" className="mr-[3px]">
        <span className="block border-y-[5px] border-l-[5px] border-y-transparent border-l-[#444]" />
      </button>
    </div>
  );
}

const tabs = [
  "STOX C164", "STOX C55", "STOX  C30", "STOX  8 Giorni", "STOX 4 giorni", "FTSEMIB C164", "FTSEMIB C55",
  "FTSEMIB C30", "FTSEMIB  8 Giorni", "FTSEMIB  4 giorni", "STOXX-FTSEMIB sito", "PERCENTUALE", "STOX vs BUND",
  "FIB vs BUND", "C164_3_Int",
];
const activeTab = 10;

function TabEdge({ index }: { index: number }) {
  const first = index === 0;
  const afterActive = index === activeTab + 1;
  const last = index === tabs.length;
  return (
    <svg className="shrink-0" width="9" height="16" viewBox="0 0 9 16" fill="none" stroke="#000">
      {index === activeTab && <path d="M2 0h7v15H8z" fill="#fff" stroke="none" />}
      {afterActive && <path d="M0 0h7L2 15H0z" fill="#fff" stroke="none" />}
      {!afterActive && !last && <path d="M1.500 0L7 15.500H9" />}
      {!first && !afterActive && !last && <path d="M4.500 8L2 15.500H0" />}
      {(afterActive || last) && <path d="M7 0L2 15.500H0" />}
      {afterActive && <path d="M5 8L7 15.500H9" />}
    </svg>
  );
}

function WorkspaceTabs() {
  return (
    <div className="flex h-[18px] items-start border-t border-black bg-[#efefef]">
      {["M4 4v8M10 3L5 8l5 5z", "M9 3L4 8l5 5z", "M5 3l5 5-5 5z", "M4 3l5 5-5 5zM11 4v8"].map((d, i) => (
        <button
          key={d}
          type="button"
          aria-label={["First tab", "Previous tab", "Next tab", "Last tab"][i]}
          className="h-4 w-[17px] shrink-0 border border-[#fff] border-r-[#777] border-b-[#777] bg-[#ececec]"
        >
          <svg width="14" height="14" viewBox="0 0 15 16">
            <path d={d} fill="#777" stroke="#777" />
          </svg>
        </button>
      ))}
      {tabs.map((label, i) => (
        <div key={label} className="flex h-4 shrink-0">
          <TabEdge index={i} />
          <button
            type="button"
            className={clsx(
              ARIAL,
              "border-b border-black text-xs leading-[15px] whitespace-pre",
              i === activeTab ? "-mt-px h-[17px] bg-white px-1 pt-px font-bold" : "h-4 px-[6px]",
            )}
          >
            {label}
          </button>
        </div>
      ))}
      <TabEdge index={tabs.length} />
    </div>
  );
}

function StatusBar() {
  const cell = "h-[18px] shrink-0 border-r border-[#d0cccc] pl-1 whitespace-nowrap";
  return (
    <footer
      className={clsx(
        UI,
        "flex h-[21px] items-end border-t border-b border-t-[#a0a0a0] border-b-[#7d97a6] bg-[#f0eceb] pl-[2px] text-sm leading-[18px]",
      )}
    >
      <p className="mr-auto">For Help, press F1</p>
      <span className={clsx(cell, "w-[51px]")}>Acct:</span>
      <span className={clsx(cell, "w-[91px]")}>Open Psns:</span>
      <span className={clsx(cell, "w-[63px]")}>DT BP:</span>
      <span className={clsx(cell, "w-[87px]")}>Purch Pwr:</span>
      <span className={clsx(cell, "w-[93px]")}>Closed P/L:</span>
      <span className={clsx(cell, "w-[60px]")}>RT TE:</span>
      <span className={clsx(cell, "w-[84px]")}>Open P/L:</span>
      <span className={clsx(cell, "w-[88px] text-[#1f8a1f]")}>ORDER BAR</span>
      <span className={clsx(cell, "w-[68px] text-[#1f8a1f]")}>MACROS</span>
      <span className={clsx(cell, "w-[19px] pl-[2px]")}>
        <svg width="12" height="14" viewBox="0 0 12 14">
          <circle cx="6" cy="6" r="5" fill="#e00000" stroke="#400" />
          <circle cx="4" cy="4" r="1.500" fill="#ff9a9a" />
        </svg>
      </span>
      <span className="w-[123px] shrink-0 pl-1 whitespace-nowrap">26/07/2023 09:11</span>
    </footer>
  );
}

export default function App() {
  return (
    <div className="flex min-h-screen w-full flex-col overflow-hidden bg-[#efefef] text-black">
      <TitleBar />
      <MenuBar />
      <Toolbar />
      <main className="relative overflow-hidden border-r-2 border-l-2 border-r-[#e8e8e8] border-l-[#a0a0a0]">
        <Chart />
        <div className="absolute top-[6px] -right-[10px] border-t border-white">
          <MdiButtons />
        </div>
      </main>
      <ScrollBar />
      <WorkspaceTabs />
      <StatusBar />
    </div>
  );
}
